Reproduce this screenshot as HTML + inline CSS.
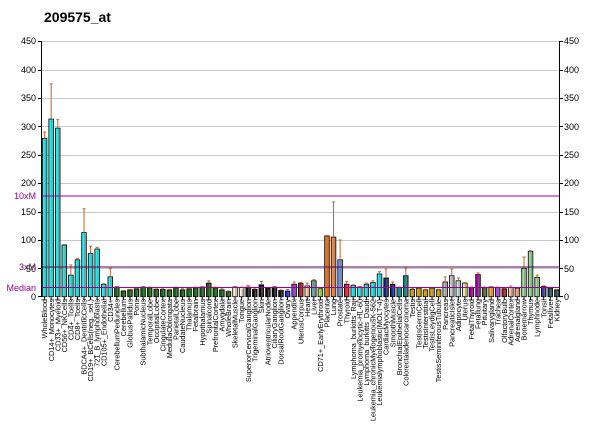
<!DOCTYPE html>
<html><head><meta charset="utf-8"><style>
html,body{margin:0;padding:0;background:#fff;width:600px;height:434px;overflow:hidden}
svg{display:block;font-family:"Liberation Sans",Arial,sans-serif}
</style></head><body>
<svg id="s" width="600" height="434" viewBox="0 0 600 434" xmlns="http://www.w3.org/2000/svg">
<text x="44" y="22" font-size="14" font-weight="bold" fill="#000">209575_at</text>
<g id="grid"></g>
<g id="bars"></g>
<line x1="41" y1="196" x2="559" y2="196" stroke="#990099" stroke-width="1"/>
<line x1="41" y1="267" x2="559" y2="267" stroke="#550055" stroke-width="1"/>
<line x1="41" y1="287.5" x2="559" y2="287.5" stroke="#990099" stroke-width="1"/>
<line x1="41.5" y1="41" x2="41.5" y2="297" stroke="#000"/>
<line x1="559.5" y1="41" x2="559.5" y2="297" stroke="#000"/>
<g font-size="9" fill="#000" id="ylab">
<text x="36" y="44" text-anchor="end">450</text><text x="36" y="73" text-anchor="end">400</text>
<text x="36" y="101" text-anchor="end">350</text><text x="36" y="130" text-anchor="end">300</text>
<text x="36" y="158" text-anchor="end">250</text><text x="36" y="186" text-anchor="end">200</text>
<text x="36" y="215" text-anchor="end">150</text><text x="36" y="243" text-anchor="end">100</text>
<text x="36" y="272" text-anchor="end">50</text><text x="36" y="300" text-anchor="end">0</text>
<text x="564" y="44">450</text><text x="564" y="73">400</text><text x="564" y="101">350</text>
<text x="564" y="130">300</text><text x="564" y="158">250</text><text x="564" y="186">200</text>
<text x="564" y="215">150</text><text x="564" y="243">100</text><text x="564" y="272">50</text><text x="564" y="300">0</text>
</g>
<g font-size="9" fill="#990099">
<text x="36" y="199" text-anchor="end">10xM</text>
<text x="36" y="270" text-anchor="end" fill="#660066">3xM</text>
<text x="36" y="291" text-anchor="end">Median</text>
</g>
<g id="labels" font-size="7.3" fill="#000" text-anchor="end">
<text>WholeBlood</text><text>CD14+_Monocytes</text><text>CD33+_Myeloid</text><text>CD56+_NKCells</text><text>CD4+_Tcells</text><text>CD8+_Tcells</text><text>BDCA4+_DentriticCells</text><text>CD19+_BCells(neg._sel.)</text><text>721_B_lymphoblasts</text><text>CD105+_Endothelial</text><text>CD34+</text><text>CerebellumPeduncles</text><text>Cerebellum</text><text>GlobusPallidus</text><text>Pons</text><text>SubthalamicNucleus</text><text>TemporalLobe</text><text>OccipitalLobe</text><text>CingulateCortex</text><text>MedullaOblongata</text><text>ParietalLobe</text><text>CaudateNucleus</text><text>Thalamus</text><text>Fetalbrain</text><text>Hypothalamus</text><text>Spinalcord</text><text>PrefrontalCortex</text><text>Amygdala</text><text>WholeBrain</text><text>SkeletalMuscle</text><text>Tongue</text><text>SuperiorCervicalGanglion</text><text>TrigeminalGanglion</text><text>Skin</text><text>AtrioventricularNode</text><text>CiliaryGanglion</text><text>DorsalRootGanglion</text><text>Ovary</text><text>Appendix</text><text>UterusCorpus</text><text>Heart</text><text>Liver</text><text>CD71+_EarlyErythroid</text><text>Placenta</text><text>Lung</text><text>Prostate</text><text>Thyroid</text><text>Lymphoma_burkitts_Raji</text><text>Leukemia_promyelocytic-HL-60</text><text>Lymphoma_burkitts_Daudi</text><text>Leukemia_chronicMyelogenousK-562</text><text>Leukemialymphoblastic(MOLT-4)</text><text>CardiacMyocytes</text><text>SmoothMuscle</text><text>BronchialEpithelialCells</text><text>Colorectaladenocarcinoma</text><text>Testis</text><text>TestisGermCell</text><text>TestisInterstitial</text><text>TestisLeydigCell</text><text>TestisSeminiferousTubule</text><text>Pancreas</text><text>PancreaticIslet</text><text>Adipocyte</text><text>Uterus</text><text>FetalThyroid</text><text>Fetallung</text><text>Pituitary</text><text>Salivarygland</text><text>Trachea</text><text>OlfactoryBulb</text><text>AdrenalCortex</text><text>Adrenalgland</text><text>Bonemarrow</text><text>Thymus</text><text>Lymphnode</text><text>Tonsil</text><text>Fetalliver</text><text>Kidney</text>
</g>
</svg>
<script>
var NS="http://www.w3.org/2000/svg";
function Y(v){return 296.7-v*0.5676;}
function el(t,a,p){var e=document.createElementNS(NS,t);for(var k in a)e.setAttribute(k,a[k]);p.appendChild(e);return e;}
var g=document.getElementById("grid");
for(var v=50;v<=450;v+=50){var y=Math.round(Y(v))+0.5;el("line",{x1:41,y1:y,x2:559,y2:y,stroke:"#c8c8c8","stroke-width":1},g);
el("line",{x1:38,y1:y,x2:41,y2:y,stroke:"#000"},g);el("line",{x1:559,y1:y,x2:563,y2:y,stroke:"#000"},g);}
el("line",{x1:38,y1:296.5,x2:41,y2:296.5,stroke:"#000"},g);el("line",{x1:559,y1:296.5,x2:563,y2:296.5,stroke:"#000"},g);
var C="#22eeee",G="#116611",K="#111111";
var d=[[279,290,C],[313,375,C],[297,312,C],[91,92,C],[38,56,C],[65,67,C],[113,155,C],[76,89,C],[84,87,C],[22,23,C],[35,50,C],
[17,18,G],[10,11,G],[12,13,G],[14,15,G],[17,18,G],[16,17,G],[13,14,G],[13,14,G],[12,13,G],[16,17,G],[12,14,G],[14,15,G],[16,17,G],[17,18,G],[24,28,G],[16,17,G],[12,14,G],[9,10,G],
[17,18,"#fff3dd"],[16,17,"#fff3dd"],[17,20,K],[13,14,K],[21,27,K],[15,16,K],[17,18,K],[11,12,K],[10,13,"#1133ee"],[22,26,"#9933ee"],
[24,25,"#aa2222"],[19,24,"#ffddaa"],[28,30,"#66aaaa"],[14,15,"#99ee33"],[107,108,"#ee7722"],[105,167,"#ff8844"],[65,100,"#6699ee"],[22,27,"#ee2233"],[20,21,C],[17,18,C],[22,24,C],[25,28,C],[40,44,C],[33,49,"#112288"],[22,26,"#112288"],[16,17,"#118888"],[37,50,"#118888"],[13,15,"#ddaa00"],[15,16,"#ddaa00"],[12,13,"#ddaa00"],[15,16,"#ddaa00"],[12,13,"#ddaa00"],[26,35,"#bbbbbb"],[37,49,"#cccccc"],[28,33,"#bbeeee"],[24,25,"#eeee99"],[16,17,"#990099"],[39,42,"#aa00aa"],[16,17,"#556b2f"],[17,18,"#ffaa22"],[16,17,"#aa44ee"],[14,16,"#cc1111"],[16,19,"#ffbbaa"],[15,16,"#ffaa88"],[50,70,"#99dd99"],[80,81,"#99dd99"],[34,38,"#99dd99"],[18,19,"#443399"],[15,16,"#225555"],[12,13,"#225555"]];
var b=document.getElementById("bars");
for(var i=0;i<d.length;i++){var x=42.3+i*6.567,v=d[i][0],e=d[i][1],y=Y(v);
el("rect",{x:x,y:y,width:4.6,height:296.7-y,fill:d[i][2],stroke:"#000","stroke-width":0.8},b);
el("rect",{x:x+2.3,y:y+1,width:1.4,height:295.7-y,fill:"rgba(128,128,128,0.55)"},b);
var ey=Y(e);if(e>v+0.5){el("line",{x1:x+2.3,y1:y,x2:x+2.3,y2:ey,stroke:"#c8602a","stroke-width":1},b);}
el("line",{x1:x+0.8,y1:ey,x2:x+3.8,y2:ey,stroke:"#c8602a","stroke-width":1},b);}
var L=document.getElementById("labels").children;
for(var i=0;i<L.length;i++){var cx=44.6+i*6.567+2.6;L[i].setAttribute("transform","translate("+cx.toFixed(1)+",299) rotate(-90)");
el("line",{x1:cx-2.6,y1:297,x2:cx-2.6,y2:300,stroke:"#000"},g);}
</script>
</body></html>
